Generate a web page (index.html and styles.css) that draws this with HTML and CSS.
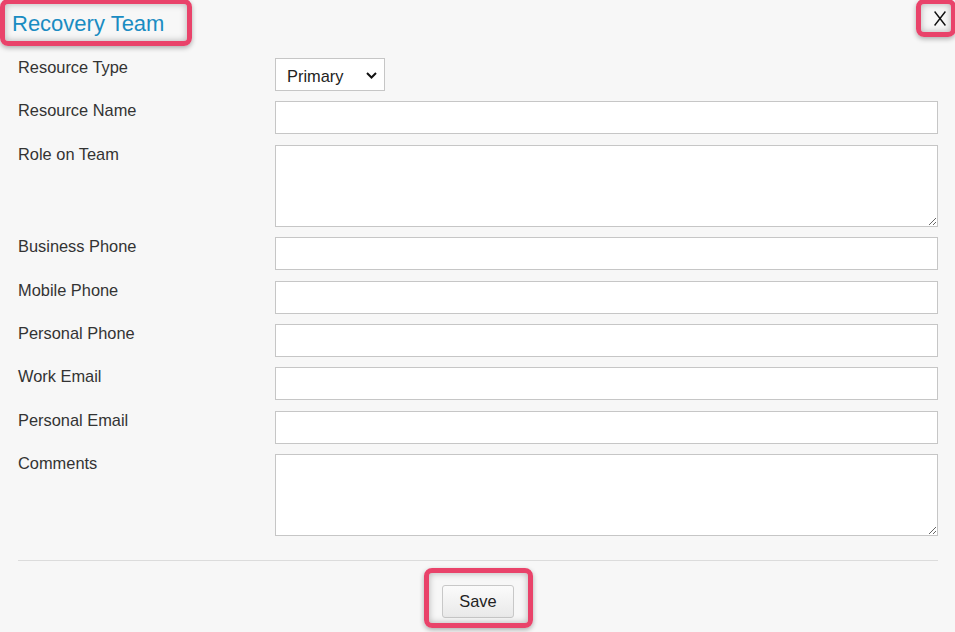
FILE: index.html
```html
<!DOCTYPE html>
<html lang="en">
<head>
    <meta charset="UTF-8">
    <meta name="viewport" content="width=device-width, initial-scale=1.0">
    <title>Recovery Team</title>
    <link rel="stylesheet" href="styles.css">
</head>
<body>
    <div class="team-dialog">
        <header class="team-head">
            <h1 class="team-title">Recovery Team</h1>
            <button class="close-btn" aria-label="Close">
                <svg width="12" height="15" viewBox="0 0 12 15">
                    <path d="M0.6 0.5 L11.4 14.5 M11.4 0.5 L0.6 14.5" stroke="#111" stroke-width="1.4" fill="none"/>
                </svg>
            </button>
        </header>

        <form class="team-form">
            <div class="form-row">
                <label for="resType">Resource Type</label>
                <div class="select-wrap">
                    <select id="resType" class="type-select">
                        <option>Primary</option>
                        <option>Secondary</option>
                    </select>
                    <svg class="select-arrow" width="11" height="7" viewBox="0 0 11 7">
                        <path d="M1 1 L5.5 5.5 L10 1" stroke="#111" stroke-width="2" fill="none"/>
                    </svg>
                </div>
            </div>
            <div class="form-row">
                <label for="resName">Resource Name</label>
                <input type="text" id="resName" class="field">
            </div>
            <div class="form-row">
                <label for="role">Role on Team</label>
                <textarea id="role" class="field field-area"></textarea>
            </div>
            <div class="form-row">
                <label for="bizPhone">Business Phone</label>
                <input type="text" id="bizPhone" class="field">
            </div>
            <div class="form-row">
                <label for="mobPhone">Mobile Phone</label>
                <input type="text" id="mobPhone" class="field">
            </div>
            <div class="form-row">
                <label for="perPhone">Personal Phone</label>
                <input type="text" id="perPhone" class="field">
            </div>
            <div class="form-row">
                <label for="workEmail">Work Email</label>
                <input type="text" id="workEmail" class="field">
            </div>
            <div class="form-row">
                <label for="perEmail">Personal Email</label>
                <input type="text" id="perEmail" class="field">
            </div>
            <div class="form-row">
                <label for="comments">Comments</label>
                <textarea id="comments" class="field field-area"></textarea>
            </div>

            <div class="form-foot">
                <button type="button" class="save-btn">Save</button>
            </div>
        </form>

        <!-- callout marks -->
        <div class="mark mark-title"></div>
        <div class="mark mark-close"></div>
        <div class="mark mark-save"></div>
    </div>
</body>
</html>
```

FILE: styles.css
```css
:root {
    --page-bg: #f7f7f7;
    --field-border: #c6c6c6;
    --title-color: #1a8cc2;
    --mark-color: #e9436a;
}

* {
    box-sizing: border-box;
}

body {
    margin: 0;
    background: var(--page-bg);
    font-family: "Liberation Sans", Arial, sans-serif;
    color: #333;
}

.team-dialog {
    position: relative;
    width: 955px;
    height: 632px;
    overflow: hidden;
}

.team-head {
    display: flex;
    justify-content: space-between;
    align-items: flex-start;
    height: 58px;
}

.team-title {
    margin: 12px 0 0 12px;
    font-size: 22px;
    font-weight: normal;
    line-height: 24px;
    color: var(--title-color);
}

.close-btn {
    margin: 11px 9px 0 0;
    padding: 0;
    border: none;
    background: none;
    cursor: pointer;
    line-height: 0;
}

.team-form {
    display: flex;
    flex-direction: column;
    gap: 10.4px;
    padding: 0 17px 0 18px;
}

.form-row {
    display: flex;
    align-items: flex-start;
}

.form-row label {
    width: 257px;
    flex-shrink: 0;
    font-size: 16.4px;
    line-height: 18px;
    color: #333;
}

.field {
    flex: 1;
    height: 33px;
    border: 1px solid var(--field-border);
    background: #fff;
    font-family: inherit;
    font-size: 16px;
    padding: 4px 8px;
    outline: none;
}

.field-area {
    height: 82px;
    resize: vertical;
}

.select-wrap {
    position: relative;
    width: 110px;
}

.type-select {
    appearance: none;
    width: 110px;
    height: 33px;
    border: 1px solid var(--field-border);
    background: #fff;
    padding: 2px 0 0 11px;
    font-family: inherit;
    font-size: 16.4px;
    color: #222;
    outline: none;
}

.select-arrow {
    position: absolute;
    left: 91px;
    top: 14px;
    pointer-events: none;
}

.form-foot {
    display: flex;
    justify-content: center;
    margin-top: 13.6px;
    padding-top: 24px;
    border-top: 1px solid #dcdcdc;
}

.save-btn {
    width: 72px;
    height: 33px;
    border: 1px solid #c8c8c8;
    border-radius: 3px;
    background: linear-gradient(#fbfbfb, #e9e9e9);
    font-family: inherit;
    font-size: 16.4px;
    color: #222;
    cursor: pointer;
}

.mark {
    position: absolute;
    border: 5px solid var(--mark-color);
    border-radius: 8px;
    box-shadow: 0 2px 5px rgba(0, 0, 0, 0.3), inset 0 0 7px rgba(0, 0, 0, 0.28);
    pointer-events: none;
}

.mark-title {
    left: 0;
    top: -1px;
    width: 192px;
    height: 47px;
}

.mark-close {
    left: 916px;
    top: -1px;
    width: 40px;
    height: 38px;
}

.mark-save {
    left: 424px;
    top: 568px;
    width: 109px;
    height: 60px;
}
```
